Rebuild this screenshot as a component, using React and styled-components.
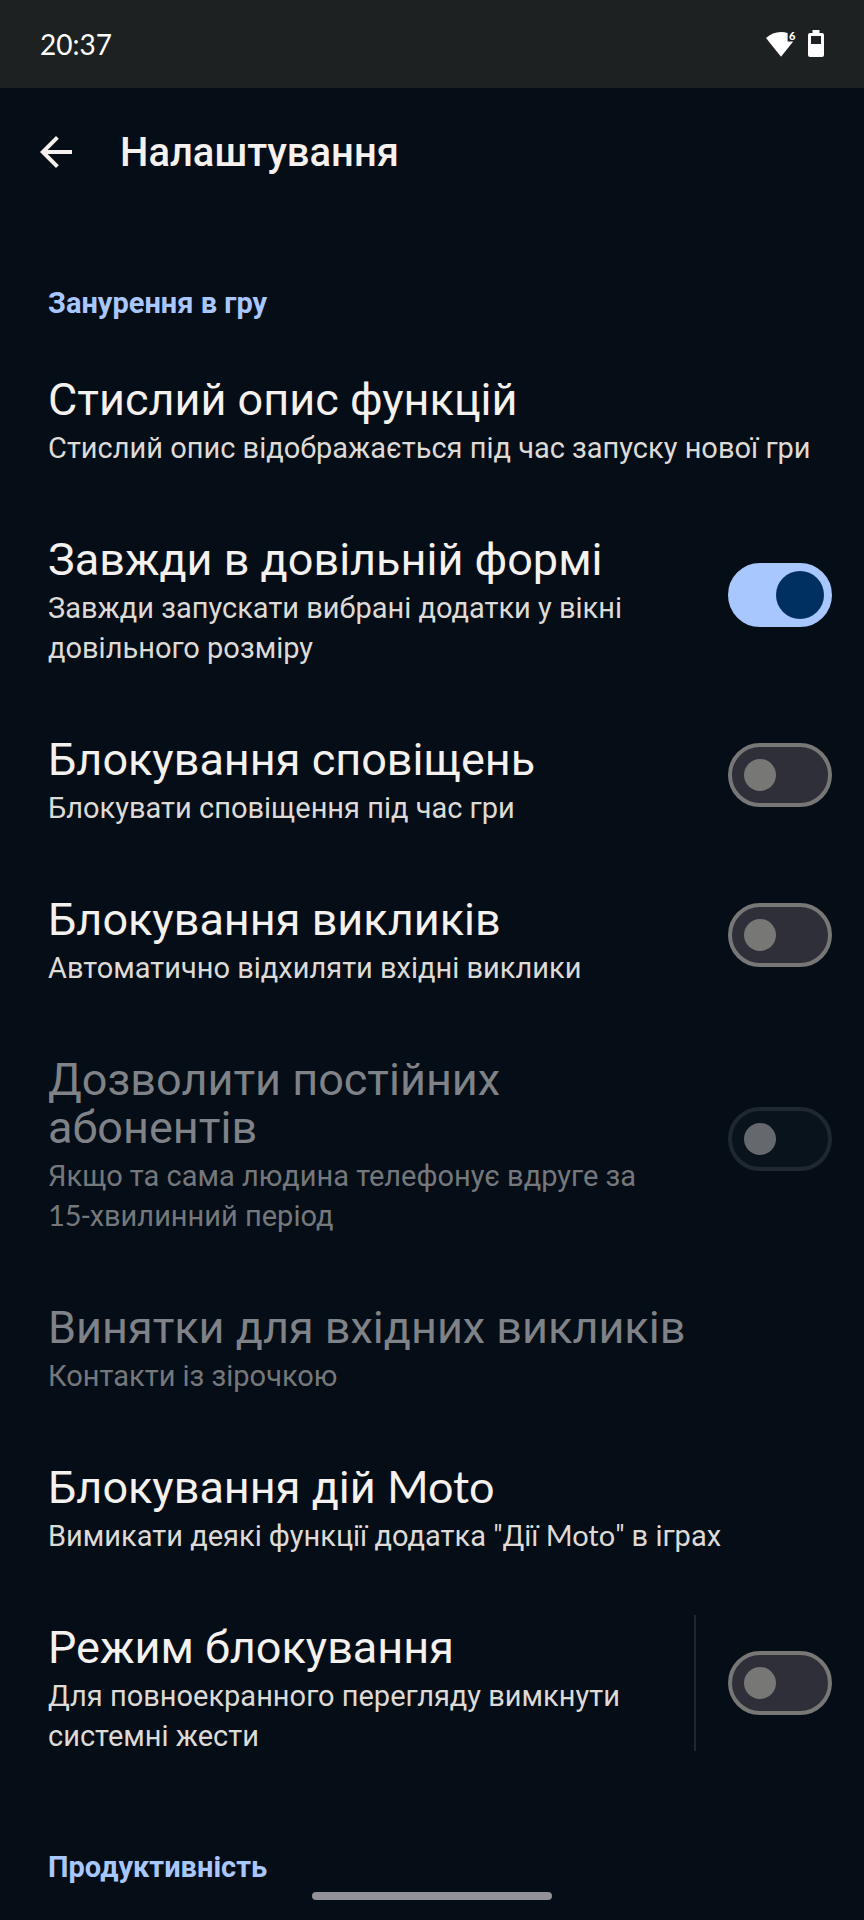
import React, { useState } from "react";
import styled, { createGlobalStyle } from "styled-components";

const GlobalStyle = createGlobalStyle`
  * {
    box-sizing: border-box;
  }

  body {
    margin: 0;
    background: #050d17;
    color: #f5f1ee;
    font-family: Roboto, "Noto Sans", sans-serif;
  }
`;

const Screen = styled.div`
  min-height: 100vh;
`;

const StatusBar = styled.div`
  display: flex;
  align-items: center;
  justify-content: space-between;
  height: 88px;
  padding: 0 40px;
  background: #1d2122;
  color: #fff;
`;

const Clock = styled.time`
  font-family: Lato, sans-serif;
  font-size: 28px;
  line-height: 40px;
`;

const StatusIcons = styled.div`
  display: flex;
  align-items: center;
  gap: 12px;
`;

const AppBar = styled.header`
  display: flex;
  align-items: center;
  gap: 40px;
  height: 128px;
  padding: 0 32px;
`;

const BackButton = styled.button`
  display: flex;
  padding: 0;
  border: none;
  background: none;
  color: #f5f1ee;
  cursor: pointer;
`;

const PageTitle = styled.h1`
  margin: 0;
  padding-top: 2px;
  font-size: 40px;
  font-weight: 500;
  line-height: 48px;
`;

const SectionTitle = styled.h2`
  margin: 0;
  padding: 67px 48px 12px;
  color: #a9c7ff;
  font-size: 29px;
  font-weight: 700;
  line-height: 40px;
`;

const Section = styled.section`
  & + & ${SectionTitle} {
    padding-top: 64px;
  }
`;

const Row = styled.div`
  display: flex;
  align-items: center;
  padding: 0 32px 0 48px;
`;

const RowText = styled.div`
  flex: 1;
  padding: 41px 0 27px;
`;

const RowTitle = styled.label`
  display: block;
  color: ${(props) => (props.$disabled ? "#7f8286" : "#f5f1ee")};
  font-size: 45px;
  line-height: 48px;
`;

const RowSummary = styled.p`
  margin: 4px 0 0;
  color: ${(props) => (props.$disabled ? "#75787b" : "#dedbd7")};
  font-size: 29px;
  line-height: 40px;
`;

// zero line height keeps the second font from growing the line box
const Latin = styled.span`
  font-family: Lato, sans-serif;
  line-height: 0;
`;

const NoWrap = styled.span`
  white-space: nowrap;
`;

const RowControl = styled.div`
  display: flex;
  align-items: center;
  height: 136px;
  margin-left: 24px;
  padding-left: 32px;
  border-left: 2px solid ${(props) => (props.$divided ? "#20272f" : "transparent")};
`;

const Switch = styled.input`
  appearance: none;
  display: flex;
  align-items: center;
  width: 104px;
  height: 64px;
  margin: 0;
  padding: 0 12px;
  border: 4px solid #777776;
  border-radius: 32px;
  background: #2e2f39;
  cursor: pointer;

  &::before {
    content: "";
    width: 32px;
    height: 32px;
    border-radius: 50%;
    background: #777776;
  }

  &:checked {
    justify-content: flex-end;
    padding: 0 4px;
    border-color: #a9c7ff;
    background: #a9c7ff;
  }

  &:checked::before {
    width: 48px;
    height: 48px;
    background: #003062;
  }

  &:disabled {
    border-color: #20282f;
    background: #09131b;
    cursor: default;
  }

  &:disabled::before {
    background: #65696d;
  }
`;

const HomeIndicator = styled.div`
  position: fixed;
  bottom: 20px;
  left: 50%;
  width: 240px;
  height: 8px;
  margin-left: -120px;
  border-radius: 4px;
  background: #909297;
`;

const WifiIcon = () => (
  <svg width="30" height="28" viewBox="0 0 30 28" role="img" aria-label="Wi-Fi 6">
    <path
      d="M0 8C4.2 4.200 9.400 2 15 2c2.400 0 4.600.4 6.600 1.100V11.500h5.600L15 26.800z"
      fill="currentColor"
    />
    <text x="23" y="10" fill="currentColor" fontFamily="Lato" fontSize="11" fontWeight="900">
      6
    </text>
  </svg>
);

const BatteryIcon = () => (
  <svg width="16" height="28" viewBox="0 0 16 28" role="img" aria-label="Battery">
    <path
      fillRule="evenodd"
      d="M4.500 0h7v3H14a2 2 0 0 1 2 2v20a2 2 0 0 1-2 2H2a2 2 0 0 1-2-2V5a2 2 0 0 1 2-2h2.500zM3 6v8h10V6z"
      fill="currentColor"
    />
  </svg>
);

const BackIcon = () => (
  <svg width="48" height="48" viewBox="0 0 24 24" fill="currentColor" aria-hidden="true">
    <path d="M20 11H7.830l5.590-5.590L12 4l-8 8 8 8 1.410-1.410L7.830 13H20v-2z" />
  </svg>
);

const settings = [
  {
    id: "overview",
    title: "Стислий опис функцій",
    summary: "Стислий опис відображається під час запуску нової гри",
  },
  {
    id: "freeform",
    title: "Завжди в довільній формі",
    summary: "Завжди запускати вибрані додатки у вікні довільного розміру",
    toggle: true,
  },
  {
    id: "notifications",
    title: "Блокування сповіщень",
    summary: "Блокувати сповіщення під час гри",
    toggle: true,
  },
  {
    id: "calls",
    title: "Блокування викликів",
    summary: "Автоматично відхиляти вхідні виклики",
    toggle: true,
  },
  {
    id: "repeat",
    title: "Дозволити постійних абонентів",
    summary: (
      <>
        Якщо та сама людина телефонує вдруге за{" "}
        <NoWrap>
          <Latin>15</Latin>-хвилинний
        </NoWrap>{" "}
        період
      </>
    ),
    toggle: true,
    disabled: true,
  },
  {
    id: "exceptions",
    title: "Винятки для вхідних викликів",
    summary: "Контакти із зірочкою",
    disabled: true,
  },
  {
    id: "moto",
    title: (
      <>
        Блокування дій <Latin>Moto</Latin>
      </>
    ),
    summary: (
      <>
        Вимикати деякі функції додатка "Дії <Latin>Moto</Latin>" в іграх
      </>
    ),
  },
  {
    id: "lock",
    title: "Режим блокування",
    summary: "Для повноекранного перегляду вимкнути системні жести",
    toggle: true,
    divided: true,
  },
];

const SettingRow = ({ item, checked, onToggle }) => (
  <Row>
    <RowText>
      <RowTitle
        as={item.toggle ? "label" : "div"}
        htmlFor={item.toggle ? item.id : undefined}
        $disabled={item.disabled}
      >
        {item.title}
      </RowTitle>
      <RowSummary $disabled={item.disabled}>{item.summary}</RowSummary>
    </RowText>
    {item.toggle && (
      <RowControl $divided={item.divided}>
        <Switch
          type="checkbox"
          role="switch"
          id={item.id}
          checked={checked}
          disabled={item.disabled}
          onChange={() => onToggle(item.id)}
        />
      </RowControl>
    )}
  </Row>
);

const App = () => {
  const [enabled, setEnabled] = useState({ freeform: true });

  const toggle = (id) => setEnabled((prev) => ({ ...prev, [id]: !prev[id] }));

  return (
    <Screen>
      <GlobalStyle />
      <StatusBar>
        <Clock>20:37</Clock>
        <StatusIcons>
          <WifiIcon />
          <BatteryIcon />
        </StatusIcons>
      </StatusBar>
      <AppBar>
        <BackButton type="button" aria-label="Назад">
          <BackIcon />
        </BackButton>
        <PageTitle>Налаштування</PageTitle>
      </AppBar>
      <main>
        <Section>
          <SectionTitle>Занурення в гру</SectionTitle>
          {settings.map((item) => (
            <SettingRow
              key={item.id}
              item={item}
              checked={!!enabled[item.id]}
              onToggle={toggle}
            />
          ))}
        </Section>
        <Section>
          <SectionTitle>Продуктивність</SectionTitle>
        </Section>
      </main>
      <HomeIndicator />
    </Screen>
  );
};

export default App;
